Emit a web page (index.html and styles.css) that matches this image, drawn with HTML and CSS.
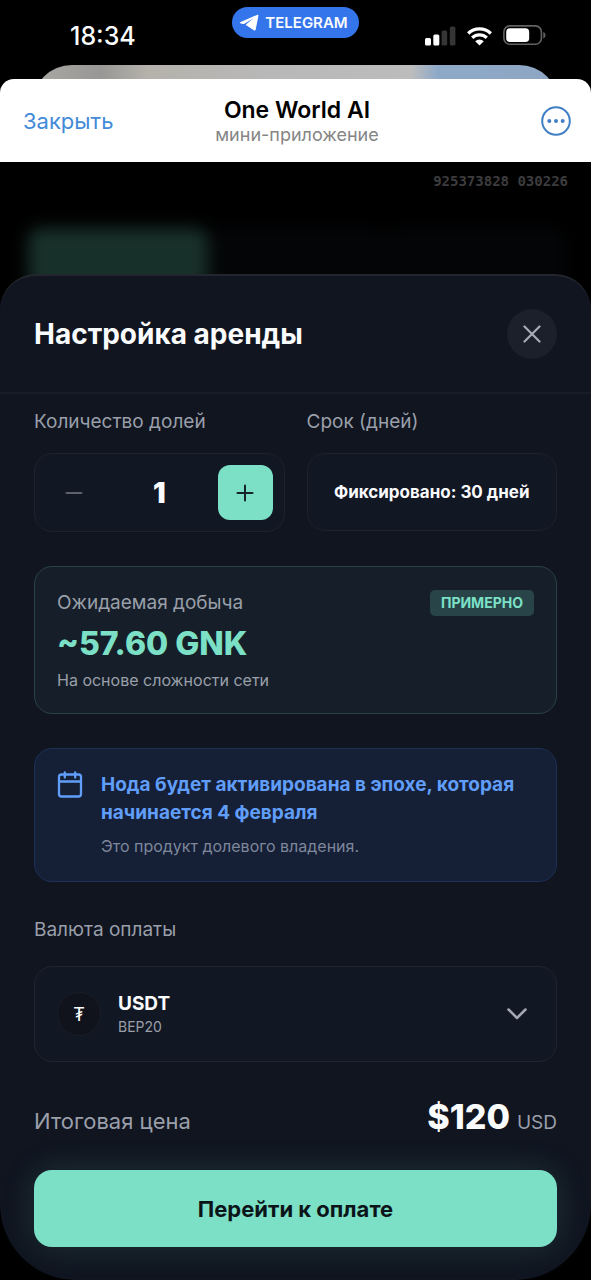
FILE: index.html
```html
<!DOCTYPE html>
<html lang="ru">
<head>
<meta charset="utf-8">
<meta name="viewport" content="width=device-width, initial-scale=1">
<title>One World AI</title>
<link rel="stylesheet" href="styles.css">
</head>
<body>
<div class="screen">
  <div class="status-bar">
    <time class="clock">18:34</time>
    <span class="app-pill">
      <svg width="20" height="18" viewBox="0 0 20 18" aria-hidden="true"><path d="M1.2 8.2 18 .9c.9-.4 1.6.1 1.4 1.100L16.700 15.500c-.2 1-1 1.200-1.800.7L7.200 11.200c-.4-.3-.3-.6 0-.9L14.800 3.900 5.100 9.900c-.4.2-.8.3-1.200.1L1.200 9.200c-.6-.2-.6-.7 0-1z" fill="#fff"/></svg>
      TELEGRAM
    </span>
    <span class="indicators">
      <svg width="31" height="20" viewBox="0 0 31 20" aria-label="Сигнал"><rect x="0" y="12" width="6" height="7.500" rx="1.500" fill="#fff"/><rect x="8.300" y="8.500" width="6" height="11" rx="1.500" fill="#fff"/><rect x="16.600" y="4.500" width="5.600" height="15" rx="1.500" fill="#353535"/><rect x="24.800" y="0.500" width="5.600" height="19" rx="1.500" fill="#353535"/></svg>
      <svg width="27" height="20" viewBox="0 0 27 20" aria-label="Wi-Fi"><path d="M2.200 7.400A16.300 16.300 0 0 1 24.800 7.400M6.200 11.800A10.600 10.600 0 0 1 20.800 11.800" fill="none" stroke="#fff" stroke-width="3.400"/><path d="m13.500 19.600-4.300-4.300a6.300 6.300 0 0 1 8.600 0z" fill="#fff"/></svg>
      <svg width="43" height="21" viewBox="0 0 43 21" aria-label="Батарея"><rect x=".9" y=".9" width="37.500" height="18.400" rx="6" fill="none" stroke="#626262" stroke-width="1.600"/><rect x="3.200" y="3.200" width="23" height="13.800" rx="3.800" fill="#fff"/><path d="M40.300 7v6.500c1.300-.6 2.200-1.800 2.200-3.200s-.9-2.700-2.200-3.300z" fill="#626262"/></svg>
    </span>
  </div>

  <div class="stack-peek"></div>

  <header class="mini-header">
    <button class="link-button" type="button">Закрыть</button>
    <div class="mini-title">
      <h1>One World AI</h1>
      <p>мини-приложение</p>
    </div>
    <button class="more-button" type="button" aria-label="Ещё">
      <svg width="30" height="30" viewBox="0 0 30 30"><circle cx="15" cy="15" r="13.800" fill="none" stroke="#417fc5" stroke-width="2"/><g fill="#417fc5"><circle cx="8.300" cy="15" r="2"/><circle cx="15" cy="15" r="2"/><circle cx="21.700" cy="15" r="2"/></g></svg>
    </button>
  </header>

  <main class="app">
    <div class="underlay">
      <p class="build">925373828 030226</p>
      <div class="blurred-tabs"><span class="tab tab-active"></span><span class="tab"></span><span class="tab"></span></div>
    </div>

    <section class="sheet" aria-labelledby="sheet-title">
      <div class="sheet-header">
        <h2 id="sheet-title">Настройка аренды</h2>
        <button class="close-button" type="button" aria-label="Закрыть окно">
          <svg width="18" height="18" viewBox="0 0 18 18"><path d="m1.500 1.500 15 15M16.500 1.500l-15 15" stroke="#a7abb5" stroke-width="2.200" stroke-linecap="round"/></svg>
        </button>
      </div>

      <form class="sheet-body">
        <div class="fields">
          <div class="field">
            <label for="shares">Количество долей</label>
            <div class="stepper">
              <button class="step" type="button" aria-label="Уменьшить" disabled><svg width="18" height="18" viewBox="0 0 18 18"><path d="M1.500 9h15" stroke="#5c616c" stroke-width="2" stroke-linecap="round"/></svg></button>
              <input id="shares" type="text" inputmode="numeric" value="1">
              <button class="step step-plus" type="button" aria-label="Увеличить"><svg width="18" height="18" viewBox="0 0 18 18"><path d="M1.500 9h15M9 1.500v15" stroke="#14242a" stroke-width="2" stroke-linecap="round"/></svg></button>
            </div>
          </div>
          <div class="field">
            <span class="label">Срок (дней)</span>
            <div class="fixed-term">Фиксировано: 30 дней</div>
          </div>
        </div>

        <div class="card yield">
          <div class="yield-top"><span class="label">Ожидаемая добыча</span><span class="badge">ПРИМЕРНО</span></div>
          <strong class="yield-value">~57.60 GNK</strong>
          <p class="note">На основе сложности сети</p>
        </div>

        <div class="card notice">
          <svg width="26" height="28" viewBox="0 0 26 28" aria-hidden="true"><g fill="none" stroke="#609efa" stroke-width="2.300" stroke-linecap="round"><rect x="2" y="3.500" width="22" height="22" rx="2.500"/><path d="M2 10.500h22M7.800 1.500v5M18.200 1.500v5"/></g></svg>
          <div class="notice-text">
            <strong>Нода будет активирована в эпохе, которая начинается 4 февраля</strong>
            <p class="note">Это продукт долевого владения.</p>
          </div>
        </div>

        <div class="currency-field">
          <span class="label" id="currency-label">Валюта оплаты</span>
          <button class="currency" type="button" aria-haspopup="listbox" aria-labelledby="currency-label currency-name">
            <span class="coin">₮</span>
            <span class="currency-text" id="currency-name"><b>USDT</b><small>BEP20</small></span>
            <svg width="22" height="14" viewBox="0 0 22 14" aria-hidden="true"><path d="m2.500 2.500 8.500 8.500 8.500-8.500" fill="none" stroke="#a3a8b2" stroke-width="2.500" stroke-linecap="round" stroke-linejoin="round"/></svg>
          </button>
        </div>

        <div class="total">
          <span class="total-label">Итоговая цена</span>
          <span class="total-price"><strong>$120</strong><span>USD</span></span>
        </div>

        <button class="pay-button" type="submit">Перейти к оплате</button>
      </form>
    </section>
  </main>
</div>
</body>
</html>
```
FILE: styles.css
```css
* { box-sizing: border-box; }

body {
  margin: 0;
  background: #000;
  color: #fafbfc;
  font-family: Inter, "Noto Sans", sans-serif;
}

h1, h2, p { margin: 0; }

button, input {
  margin: 0;
  padding: 0;
  border: 0;
  background: none;
  color: inherit;
  font: inherit;
}

svg { display: block; flex: none; }

.screen {
  display: flex;
  flex-direction: column;
  min-height: 100vh;
}

/* System status bar */
.status-bar {
  display: grid;
  grid-template-columns: 1fr auto 1fr;
  align-items: start;
  height: 65px;
  padding: 7px 45px 0 70px;
}

.clock {
  padding-top: 15px;
  font-size: 25px;
  font-weight: 500;
  line-height: 28px;
}

.app-pill {
  display: flex;
  align-items: center;
  gap: 6px;
  height: 31px;
  margin-right: 25px;
  padding: 0 11px 0 7px;
  border-radius: 16px;
  background: #3575ec;
  font-size: 15px;
  font-weight: 600;
}

.indicators {
  display: flex;
  justify-content: flex-end;
  align-items: center;
  gap: 10px;
  padding-top: 18px;
}

.stack-peek {
  height: 40px;
  margin: 0 32px -26px;
  border-radius: 40px 40px 0 0;
  background: linear-gradient(90deg, #aaa9a5 0, #989795 13%, #b5b2ac 22%, #b8b8b8 45%, #bcbcbc 72%, #8ea9c8 77%, #8ea6c4 100%);
}

/* Mini app header */
.mini-header {
  display: grid;
  grid-template-columns: 1fr auto 1fr;
  align-items: center;
  height: 83px;
  padding: 0 20px 0 23px;
  border-radius: 14px 14px 0 0;
  background: #fff;
  position: relative;
}

.link-button {
  justify-self: start;
  color: #438ad8;
  font-size: 22px;
}

.mini-title {
  color: #000;
  text-align: center;
}

.mini-title h1 {
  font-size: 23px;
  font-weight: 600;
  line-height: 28px;
}

.mini-title p {
  color: #858585;
  font-size: 18px;
  line-height: 22px;
}

.more-button { justify-self: end; }

/* App area: dimmed page with the sheet over it */
.app {
  display: grid;
  flex: 1;
}

.underlay, .sheet { grid-area: 1 / 1; }

.underlay { overflow: hidden; }

.build {
  padding: 11px 23px 0;
  color: #3c3c3e;
  font: bold 14px/16px "DejaVu Sans Mono", monospace;
  text-align: right;
}

.blurred-tabs {
  display: grid;
  grid-template-columns: 1fr 1fr 1fr;
  padding: 39px 24px 0 28px;
  filter: blur(8px);
}

.tab {
  height: 62px;
  border-radius: 12px;
  background: #040507;
}

.tab-active { background: #18302a; }

.sheet {
  margin-top: 112px;
  border-top: 2px solid #23262c;
  border-radius: 36px 36px 76px 76px;
  background: #101520;
  position: relative;
}

.sheet-header {
  display: flex;
  justify-content: space-between;
  align-items: center;
  padding: 33px 34px;
  border-bottom: 2px solid #181c27;
}

.sheet-header h2 {
  font-size: 28px;
  font-weight: 700;
  line-height: 36px;
}

.close-button {
  display: grid;
  place-items: center;
  width: 50px;
  height: 50px;
  border-radius: 50%;
  background: #1c202b;
}

.sheet-body {
  display: flex;
  flex-direction: column;
  padding: 14px 34px 33px;
}

.fields {
  display: grid;
  grid-template-columns: 1fr 1fr;
  align-items: start;
  gap: 22px;
}

.field {
  display: grid;
  gap: 17px;
}

label, .label {
  color: #9a9faa;
  font-size: 19px;
  line-height: 28px;
}

.stepper {
  display: flex;
  justify-content: space-between;
  padding: 11px;
  border: 1px solid #1d222d;
  border-radius: 18px;
  background: #121724;
}

.stepper input {
  width: 60px;
  font-size: 28px;
  font-weight: 900;
  text-align: center;
}

.step {
  display: grid;
  place-items: center;
  width: 55px;
  height: 55px;
  border-radius: 12px;
}

.step-plus { background: #7ce0c7; }

.fixed-term {
  padding: 25px 8px;
  border: 1px solid #1d222d;
  border-radius: 18px;
  background: #121724;
  font-size: 17px;
  font-weight: 700;
  line-height: 26px;
  text-align: center;
  white-space: nowrap;
}

.card {
  margin-top: 34px;
  padding: 22px;
  border-radius: 18px;
}

.yield {
  border: 1px solid #2a4247;
  background: #161f29;
}

.yield-top {
  display: flex;
  justify-content: space-between;
  align-items: center;
}

.badge {
  padding: 0 11px;
  border-radius: 5px;
  background: #284448;
  color: #7ce0c7;
  font-size: 14px;
  font-weight: 700;
  line-height: 26px;
}

.yield-value {
  display: block;
  padding: 7px 0 5px;
  color: #7ce0c7;
  font-size: 32px;
  font-weight: 800;
  line-height: 40px;
}

.note {
  color: #9a9faa;
  font-size: 16px;
  line-height: 22px;
}

.notice {
  display: flex;
  gap: 18px;
  border: 1px solid #1d3157;
  background: #151f36;
}

.notice strong {
  color: #609efa;
  font-size: 19px;
  font-weight: 700;
  line-height: 28px;
}

.notice .note {
  margin: 8px 0 2px;
  color: #7e879b;
}

.currency-field {
  display: grid;
  gap: 22px;
  margin-top: 34px;
}

.currency {
  display: flex;
  align-items: center;
  gap: 17px;
  width: 100%;
  padding: 24px 28px 24px 22px;
  border: 1px solid #1f2430;
  border-radius: 18px;
  background: #121724;
  text-align: left;
}

.coin {
  display: grid;
  place-items: center;
  width: 44px;
  height: 44px;
  border: 1px solid #191d27;
  border-radius: 50%;
  background: #10131c;
  font-size: 18px;
}

.currency-text {
  display: grid;
  flex: 1;
}

.currency-text b {
  font-size: 19px;
  font-weight: 700;
  line-height: 26px;
}

.currency-text small {
  color: #9a9faa;
  font-size: 14px;
  line-height: 20px;
}

.total {
  display: flex;
  justify-content: space-between;
  align-items: baseline;
  margin: 34px 0 32px;
}

.total-label {
  color: #9a9faa;
  font-size: 22px;
}

.total-price {
  display: flex;
  align-items: baseline;
  gap: 7px;
  color: #9a9faa;
  font-size: 19px;
}

.total-price strong {
  color: #fafbfc;
  font-size: 34px;
  font-weight: 800;
  line-height: 42px;
}

.pay-button {
  height: 77px;
  border-radius: 18px;
  background: #7ce0c7;
  box-shadow: 0 0 34px #7ce0c724;
  color: #0b1519;
  font-size: 22px;
  font-weight: 700;
}
```
